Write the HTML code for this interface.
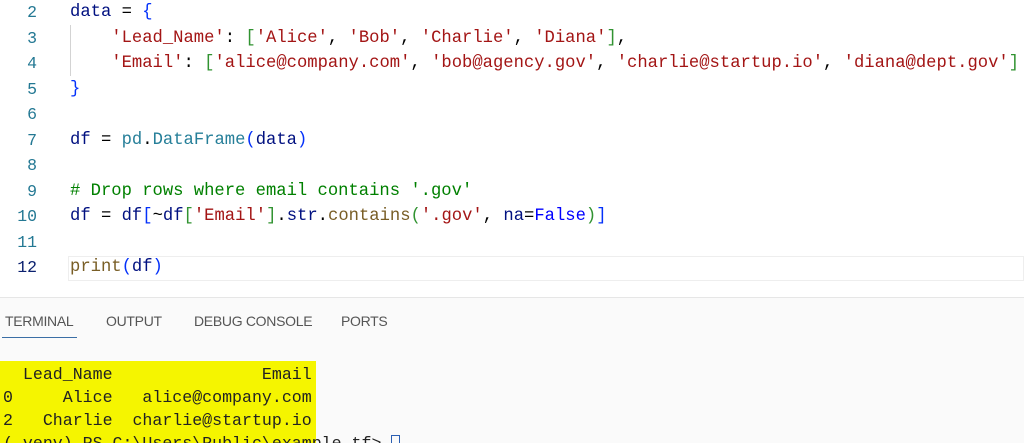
<!DOCTYPE html>
<html><head><meta charset="utf-8"><style>
*{margin:0;padding:0;box-sizing:border-box}
body{width:1024px;height:443px;overflow:hidden;background:#fff;position:relative;font-family:"Liberation Mono",monospace}
.ln{position:absolute;left:0;width:37px;text-align:right;font-size:16.5px;color:#237893;line-height:25.5px}
.cl{position:absolute;left:70px;font-size:17.2px;line-height:25.5px;white-space:pre;color:#000}
.v{color:#001080}.s{color:#a31515}.b1{color:#0431fa}.b2{color:#319331}.t{color:#267f99}.c{color:#008000}.k{color:#0000ff}.f{color:#795e26}.o{color:#000}
.cur{position:absolute;left:68px;right:0;top:256px;height:25px;border:1px solid #eeeeee}
.guide{position:absolute;left:70px;top:25px;height:51px;border-left:1px solid #d3d3d3}
.term{position:absolute;left:0;top:297px;width:1024px;height:146px;background:#fafafa;border-top:1px solid #e6e6e6;overflow:hidden}
.tab{position:absolute;top:15px;font-family:"Liberation Sans",sans-serif;font-size:14px;color:#555;letter-spacing:-0.3px}
.ul{position:absolute;left:2px;top:39px;width:75px;height:1px;background:#3a6ea5}
.y{position:absolute;left:0;top:63px;width:316px;height:83px;background:#f5f500}
.tl{position:absolute;left:3px;font-size:16.6px;line-height:23px;white-space:pre;color:#222}
</style></head><body>
<div class="cur"></div>
<div class="guide"></div>
<div class="ln" style="top:0">2</div>
<div class="ln" style="top:25.5px">3</div>
<div class="ln" style="top:51px">4</div>
<div class="ln" style="top:76.5px">5</div>
<div class="ln" style="top:102px">6</div>
<div class="ln" style="top:127.5px">7</div>
<div class="ln" style="top:153px">8</div>
<div class="ln" style="top:178.5px">9</div>
<div class="ln" style="top:204px">10</div>
<div class="ln" style="top:229.5px">11</div>
<div class="ln" style="top:255px;color:#0b216f">12</div>
<div class="cl" style="top:0"><span class="v">data</span> = <span class="b1">{</span></div>
<div class="cl" style="top:25.5px">    <span class="s">'Lead_Name'</span>: <span class="b2">[</span><span class="s">'Alice'</span>, <span class="s">'Bob'</span>, <span class="s">'Charlie'</span>, <span class="s">'Diana'</span><span class="b2">]</span>,</div>
<div class="cl" style="top:51px">    <span class="s">'Email'</span>: <span class="b2">[</span><span class="s">'alice@company.com'</span>, <span class="s">'bob@agency.gov'</span>, <span class="s">'charlie@startup.io'</span>, <span class="s">'diana@dept.gov'</span><span class="b2">]</span></div>
<div class="cl" style="top:76.5px"><span class="b1">}</span></div>
<div class="cl" style="top:127.5px"><span class="v">df</span> = <span class="t">pd</span>.<span class="t">DataFrame</span><span class="b1">(</span><span class="v">data</span><span class="b1">)</span></div>
<div class="cl" style="top:178.5px"><span class="c"># Drop rows where email contains '.gov'</span></div>
<div class="cl" style="top:204px"><span class="v">df</span> = <span class="v">df</span><span class="b1">[</span>~<span class="v">df</span><span class="b2">[</span><span class="s">'Email'</span><span class="b2">]</span>.<span class="v">str</span>.<span class="f">contains</span><span class="b2">(</span><span class="s">'.gov'</span>, <span class="v">na</span>=<span class="k">False</span><span class="b2">)</span><span class="b1">]</span></div>
<div class="cl" style="top:255px"><span class="f">print</span><span class="b1">(</span><span class="v">df</span><span class="b1">)</span></div>
<div class="term">
<div class="tab" style="left:5px">TERMINAL</div>
<div class="tab" style="left:106px">OUTPUT</div>
<div class="tab" style="left:194px">DEBUG CONSOLE</div>
<div class="tab" style="left:341px">PORTS</div>
<div class="ul"></div>
<div class="y"></div>
<div class="tl" style="top:65px">  Lead_Name               Email</div>
<div class="tl" style="top:88px">0     Alice   alice@company.com</div>
<div class="tl" style="top:111px">2   Charlie  charlie@startup.io</div>
<div class="tl" style="top:134px">(.venv) PS C:\Users\Public\example_tf> <span style="display:inline-block;width:9px;height:17px;border:1px solid #2b5fb3;vertical-align:middle"></span></div>
</div>
</body></html>
